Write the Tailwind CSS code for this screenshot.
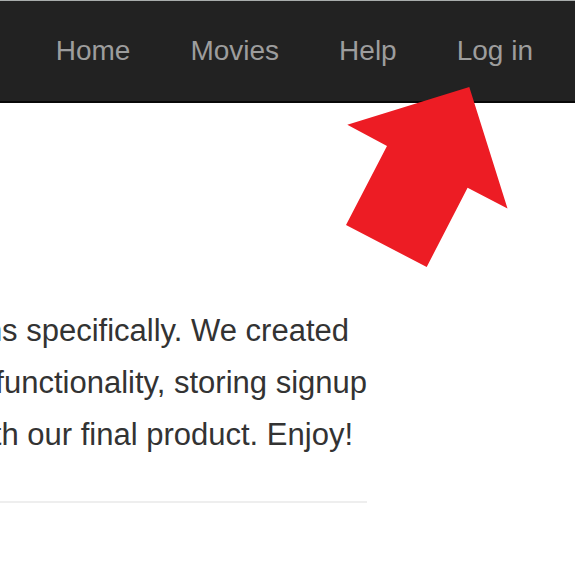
<!DOCTYPE html>
<html lang="en">
<head>
<meta charset="utf-8">
<title>Home</title>
<script src="https://cdn.jsdelivr.net/npm/@tailwindcss/browser@4"></script>
</head>
<body class="relative min-h-screen overflow-hidden bg-white font-['Liberation_Sans',Arial,sans-serif] text-[#333]">
<header class="border-t border-b-2 border-t-[#a9adac] border-b-[#080808] bg-[#222]">
  <nav aria-label="Main" class="flex h-25 items-center justify-end gap-15 pr-[42px] text-[28px] leading-10 whitespace-nowrap text-[#9d9d9d]">
    <a href="#home">Home</a>
    <a href="#movies">Movies</a>
    <a href="#help">Help</a>
    <a href="#login">Log in</a>
  </nav>
</header>
<main class="mt-[202px] mr-52">
  <p class="flex flex-col items-end text-[31px] leading-[52px] whitespace-nowrap">
    <span class="pr-[18px]">ns specifically. We created</span>
    <span>functionality, storing signup</span>
    <span class="pr-[14px]">th our final product. Enjoy!</span>
  </p>
  <hr class="mt-10 border-t-2 border-[#eee]">
</main>
<svg class="pointer-events-none absolute top-[86px] right-[67px] h-[182px] w-[163px]" viewBox="345 86 163 182" aria-hidden="true">
  <path fill="#ed1c24" d="M469.3 87 507.5 208.5 467.6 187.7 426.7 267 346 225 387 146 347.3 124.7Z"/>
</svg>
</body>
</html>
